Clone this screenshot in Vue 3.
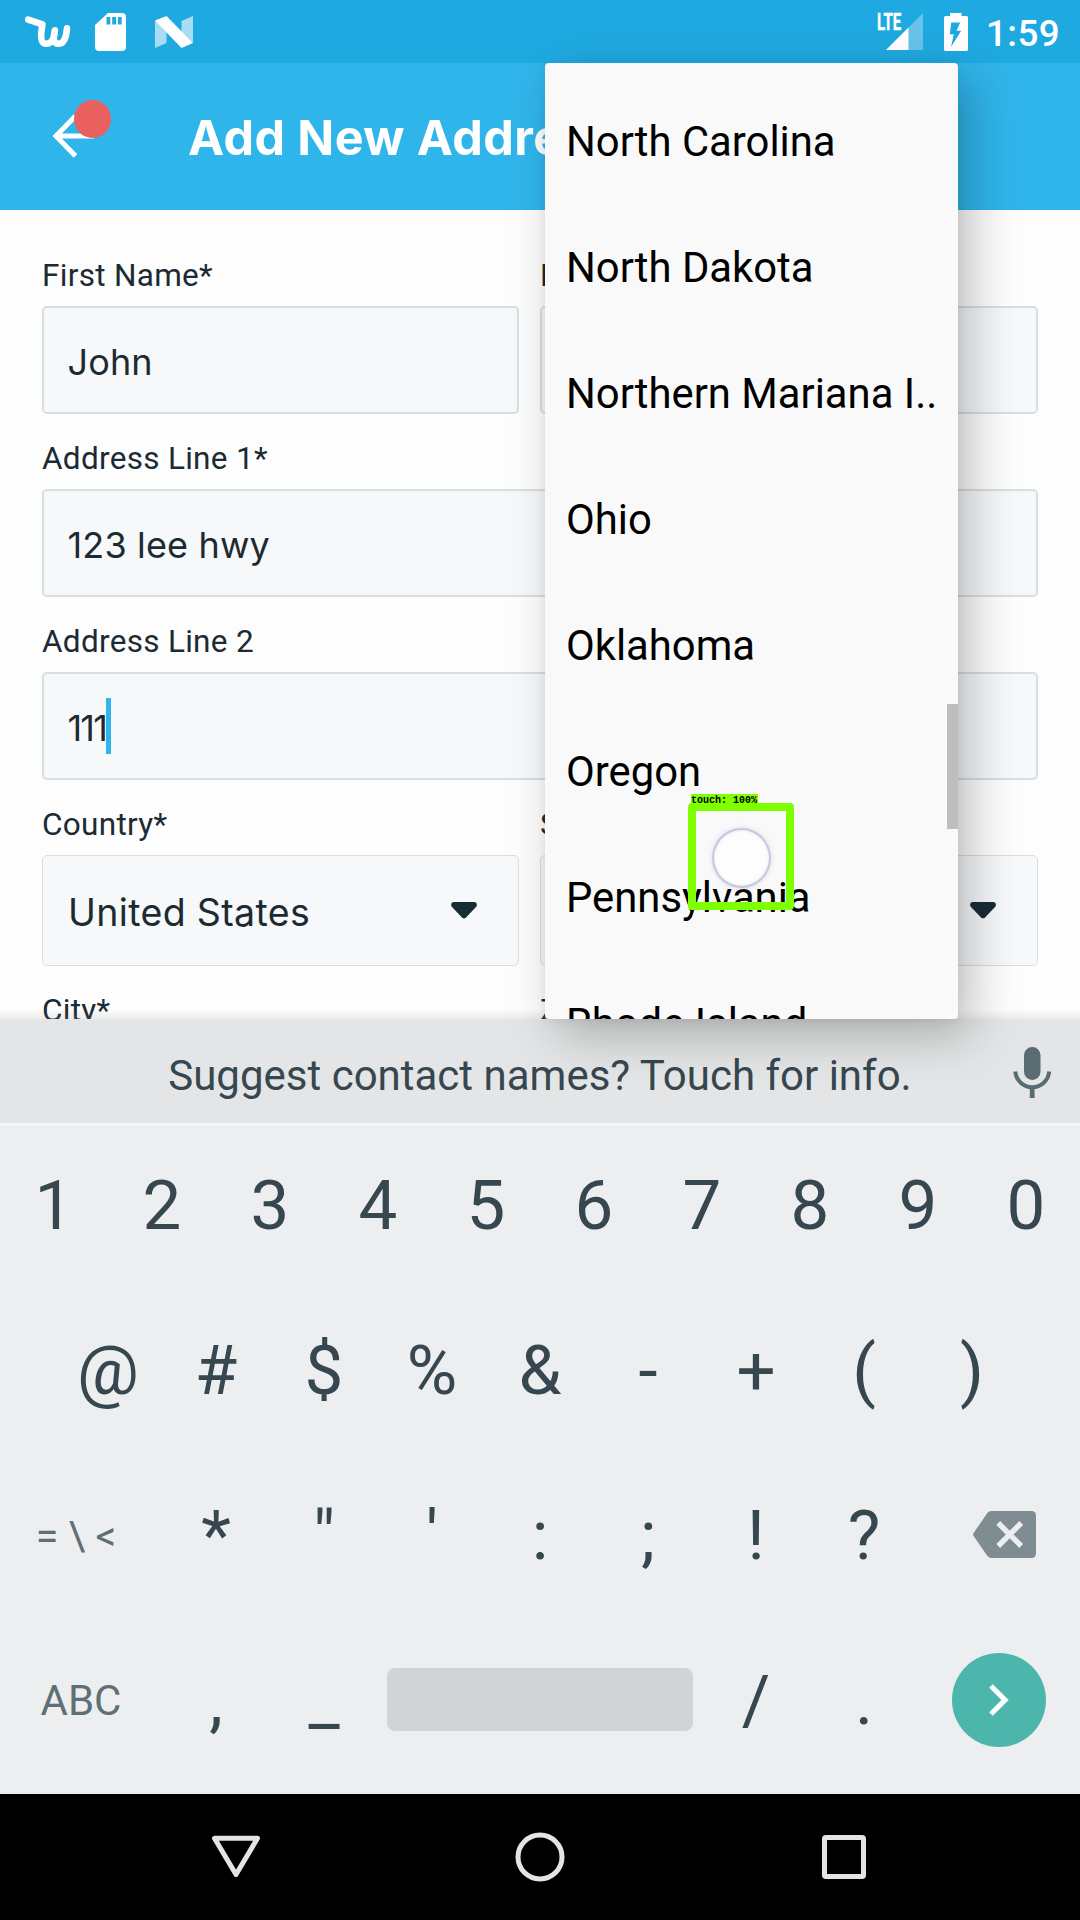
<script setup>
const formRows = [
  [{ label: 'First Name*', value: 'John' }, { label: 'Last Name*', value: '' }],
  [{ label: 'Address Line 1*', value: '123 lee hwy' }],
  [{ label: 'Address Line 2', value: '111', focused: true }],
  [
    { label: 'Country*', value: 'United States', select: true },
    { label: 'State*', value: '', select: true },
  ],
  [{ label: 'City*', value: '' }, { label: 'Zip/Postal Code*', value: '' }],
]

const states = [
  'North Carolina',
  'North Dakota',
  'Northern Mariana I..',
  'Ohio',
  'Oklahoma',
  'Oregon',
  'Pennsylvania',
  'Rhode Island',
]

const digits = ['1', '2', '3', '4', '5', '6', '7', '8', '9', '0']
const symbols = ['@', '#', '$', '%', '&', '-', '+', '(', ')']
const punctuation = ['*', '"', "'", ':', ';', '!', '?']
</script>

<template>
  <div class="screen">
    <header class="status-bar">
      <div class="notifications">
        <svg class="ic-wish" viewBox="0 0 46 33" width="46" height="33">
          <path
            d="M3.200 4.600L17.400 9.400C16.600 15 13.800 28.200 20.600 28.800C27 29 29.600 23 29.800 15.400C28.200 23 28 28.800 33.400 28.800C40 28.800 41.400 21 42 13.200"
            fill="none" stroke="#fff" stroke-width="6.600" stroke-linejoin="round" stroke-linecap="round"
          />
        </svg>
        <svg class="ic-sd" viewBox="0 0 31 38" width="31" height="38">
          <path
            fill="#fff" fill-rule="evenodd"
            d="M13 0H27a4 4 0 0 1 4 4V34a4 4 0 0 1-4 4H4a4 4 0 0 1-4-4V12zM11.500 4v7.500h3.800V4zM17.200 4v7.500h3.800V4zM22.900 4v7.500h3.800V4z"
          />
        </svg>
        <svg class="ic-n" viewBox="0 0 38 32" width="38" height="32">
          <path fill="#a8dcf4" d="M0 4.500L11.500 10V27L0 32zM26.500 5L38 0V27L26.500 16z" />
          <path fill="#fff" d="M0 4.500L11.500 0L38 27L26.500 32z" />
        </svg>
      </div>
      <div class="indicators">
        <div class="signal">
          <svg viewBox="0 0 37 37" width="37" height="37">
            <path fill="#67c3ec" d="M37 0V37H0z" />
            <path fill="#fff" d="M22.500 14.500V37H0z" />
          </svg>
          <span class="lte">LTE</span>
        </div>
        <svg class="ic-battery" viewBox="0 0 24 38" width="24" height="38">
          <path
            fill="#fff" fill-rule="evenodd"
            d="M6 0H17.500V3H22.500a1.500 1.500 0 0 1 1.500 1.500V36.500a1.500 1.500 0 0 1-1.500 1.500H1.500a1.500 1.500 0 0 1-1.500-1.500V4.500a1.500 1.500 0 0 1 1.500-1.500H6zM7.200 9.500L5.800 21.200H9.800L7 34L17.200 17.800H12.600L16.200 9.500z"
          />
        </svg>
        <span class="clock">1:59</span>
      </div>
    </header>

    <div class="app-bar">
      <div class="back">
        <svg viewBox="0 0 46 46" width="46" height="46">
          <path d="M23.500 3L4 23L23.500 43M4 23H42" fill="none" stroke="#fff" stroke-width="5" />
        </svg>
        <span class="badge"></span>
      </div>
      <h1 class="title">Add New Address</h1>
    </div>

    <main class="form">
      <div v-for="(row, r) in formRows" :key="r" class="row">
        <div v-for="f in row" :key="f.label" class="field">
          <label class="label">{{ f.label }}</label>
          <div class="box" :class="{ select: f.select }">
            <span class="value" :class="{ focused: f.focused }">{{ f.value }}</span>
            <span v-if="f.focused" class="cursor"></span>
            <svg v-if="f.select" class="caret" viewBox="0 0 26 17" width="26" height="17">
              <path
                fill="#182c36"
                d="M3 0H23C25.800 0 26.800 3 25 5L15 15.400C13.800 16.600 12.200 16.600 11 15.400L1 5C-.8 3 .2 0 3 0z"
              />
            </svg>
          </div>
        </div>
      </div>
    </main>

    <section class="keyboard">
      <div class="suggestion">
        <span>Suggest contact names? Touch for info.</span>
        <svg class="mic" viewBox="0 0 38 52" width="38" height="52">
          <rect x="11" y="0" width="16.500" height="33" rx="8.200" fill="#5b6b72" />
          <path d="M2.300 24.500A17 17 0 0 0 36.200 24.500" fill="none" stroke="#5b6b72" stroke-width="4" />
          <path d="M19.200 40V51" stroke="#5b6b72" stroke-width="4.800" />
        </svg>
      </div>
      <div class="keys">
        <div class="key-row">
          <span v-for="k in digits" :key="k" class="key">{{ k }}</span>
        </div>
        <div class="key-row inset">
          <span v-for="k in symbols" :key="k" class="key">{{ k }}</span>
        </div>
        <div class="key-row">
          <span class="key fn more">=&nbsp;\&nbsp;&lt;</span>
          <span v-for="k in punctuation" :key="k" class="key">{{ k }}</span>
          <span class="key side">
            <svg class="backspace" viewBox="0 0 63 47" width="63" height="47">
              <path
                fill="#7f8c91"
                d="M18.500 0H58.500A4.500 4.500 0 0 1 63 4.500V42.500A4.500 4.500 0 0 1 58.500 47H18.500Q15.800 47 14.400 45L.6 25Q-.4 23.500 .6 22L14.400 2Q15.800 0 18.500 0z"
              />
              <path d="M25.200 12L48.200 35M48.200 12L25.200 35" stroke="#eceef0" stroke-width="5.400" />
            </svg>
          </span>
        </div>
        <div class="key-row">
          <span class="key fn">ABC</span>
          <span class="key">,</span>
          <span class="key">_</span>
          <span class="key space"><i></i></span>
          <span class="key">/</span>
          <span class="key">.</span>
          <span class="key side">
            <span class="enter">
              <svg viewBox="0 0 22 34" width="22" height="34">
                <path d="M3 3L17 17L3 31" fill="none" stroke="#fff" stroke-width="5.200" />
              </svg>
            </span>
          </span>
        </div>
      </div>
    </section>

    <nav class="nav-bar">
      <svg viewBox="0 0 50 44" width="50" height="44">
        <path d="M3.500 3.300H46.500L25 39.500z" fill="none" stroke="#e4e4e4" stroke-width="5" stroke-linejoin="round" />
      </svg>
      <svg class="home" viewBox="0 0 50 50" width="50" height="50">
        <circle cx="25" cy="25" r="22" fill="none" stroke="#e4e4e4" stroke-width="5" />
      </svg>
      <svg viewBox="0 0 44 44" width="44" height="44">
        <rect x="2.500" y="2.500" width="39" height="39" rx="1.500" fill="none" stroke="#e4e4e4" stroke-width="5" />
      </svg>
    </nav>

    <div class="popup">
      <div class="options">
        <div v-for="s in states" :key="s" class="option">{{ s }}</div>
      </div>
      <span class="scroll-thumb"></span>
    </div>

    <div class="touch-dot"></div>
    <div class="touch-frame"></div>
    <span class="touch-label">touch: 100%</span>
  </div>
</template>

<style>
body {
  margin: 0;
}
</style>

<style scoped>
.screen {
  position: relative;
  display: flex;
  flex-direction: column;
  width: 1080px;
  height: 1920px;
  overflow: hidden;
  background: #fdfdfd;
  font-family: Roboto, sans-serif;
}

svg {
  display: block;
  flex: none;
}

.status-bar {
  display: flex;
  justify-content: space-between;
  height: 63px;
  background: #1fa9e1;
}

.notifications {
  display: flex;
  align-items: center;
  padding-left: 25px;
}

.ic-wish {
  margin-right: 24px;
}

.ic-sd {
  margin: 1px 29px 0 0;
}

.indicators {
  display: flex;
  align-items: center;
  padding-right: 20px;
}

.signal {
  position: relative;
  margin-right: 21px;
}

.lte {
  position: absolute;
  left: -9px;
  top: -2px;
  color: #fff;
  font-size: 23px;
  font-weight: 700;
  line-height: 23px;
  -webkit-text-stroke: 0.4px #fff;
  transform: scaleX(0.65);
  transform-origin: 0 0;
}

.ic-battery {
  margin-right: 18px;
}

.clock {
  margin-top: 4px;
  color: #fff;
  font-size: 36.75px;
  font-weight: 500;
  line-height: 44px;
  letter-spacing: 0.4px;
}

.app-bar {
  display: flex;
  align-items: center;
  height: 147px;
  background: #30b5eb;
}

.back {
  position: relative;
  margin: -1px 90px 0 52px;
}

.badge {
  position: absolute;
  left: 22px;
  top: -13px;
  width: 37px;
  height: 38px;
  border-radius: 50%;
  background: #ea605f;
}

.title {
  margin: 3px 0 0;
  color: #fff;
  font: 700 48.5px/60px Inter, sans-serif;
  letter-spacing: 0.4px;
  white-space: nowrap;
}

.form {
  height: 788px;
  padding: 21px 42px 0;
  overflow: hidden;
}

.row {
  display: flex;
}

.field {
  flex: 1;
}

.field + .field {
  margin-left: 21px;
  flex: 0 0 498px;
}

.label {
  display: block;
  padding: 26px 0 12px;
  color: #1c2b33;
  font-size: 31.5px;
  line-height: 37px;
  letter-spacing: 0.3px;
}

.box {
  display: flex;
  align-items: center;
  box-sizing: border-box;
  height: 108px;
  padding: 3px 0 0 23.500px;
  border: 2px solid #d5dfe6;
  border-radius: 5px;
  background: #f6f8fa;
  color: #1c2a31;
  font: 400 36px/46px Inter, sans-serif;
  letter-spacing: 0.15px;
}

.select {
  height: 111px;
  padding: 5px 41px 0 25px;
  border-width: 1px;
  font-size: 37.5px;
  letter-spacing: 0.35px;
}

.focused {
  letter-spacing: -1.8px;
}

.cursor {
  width: 5px;
  height: 56px;
  margin: -3px 0 0;
  background: #2fb7ec;
}

.caret {
  margin: -5px 0 0 auto;
}

.keyboard {
  position: relative;
  height: 775px;
  background: #eceef0;
}

/* soft edge the keyboard casts on the form */
.keyboard::before {
  content: '';
  position: absolute;
  left: 0;
  right: 0;
  top: -10px;
  height: 13px;
  background: linear-gradient(rgba(130, 135, 140, 0), rgba(130, 135, 140, 0.2));
}

.suggestion {
  display: flex;
  align-items: center;
  justify-content: center;
  position: relative;
  box-sizing: border-box;
  height: 107px;
  padding-top: 9px;
  border-bottom: 3px solid #f4f6f7;
  background: #e3e5e6;
  color: #37474f;
  font-size: 42px;
  line-height: 50px;
}

.mic {
  position: absolute;
  left: 1012.500px;
  top: 28px;
}

.keys {
  margin-top: -4px;
}

.key-row {
  display: flex;
  height: 165px;
}

.inset {
  padding: 0 54px;
}

.key {
  display: flex;
  flex: none;
  align-items: center;
  justify-content: center;
  box-sizing: border-box;
  width: 108px;
  padding-top: 2px;
  color: #37474f;
  font-size: 69px;
  line-height: 81px;
}

.fn {
  width: 162px;
  color: #5f6f76;
  font-size: 42px;
  line-height: 50px;
}

.more {
  padding-right: 10px;
  font-size: 41px;
}

.side {
  width: 162px;
  padding-top: 0;
}

.backspace {
  margin-left: 11px;
}

.space {
  width: 324px;
  padding-top: 0;
}

.space i {
  width: 306px;
  height: 63px;
  border-radius: 8px;
  background: #d0d4d6;
}

.enter {
  display: flex;
  align-items: center;
  justify-content: center;
  width: 94px;
  height: 94px;
  border-radius: 50%;
  background: #4db6ac;
}

.nav-bar {
  display: flex;
  align-items: center;
  justify-content: space-between;
  box-sizing: border-box;
  height: 126px;
  padding: 0 214px 0 211px;
  background: #000;
}

.home {
  margin-right: 3px;
}

.popup {
  position: absolute;
  left: 545px;
  top: 63px;
  width: 413px;
  height: 956px;
  border-radius: 4px;
  background: #f9f9f9;
  box-shadow: 13px 16px 48px rgba(0, 0, 0, 0.25), 0 2px 10px rgba(0, 0, 0, 0.06);
}

.options {
  height: 940px;
  padding-top: 16px;
  overflow: hidden;
}

.option {
  padding-left: 21px;
  color: #000;
  font-size: 41.8px;
  line-height: 126px;
  white-space: nowrap;
}

.scroll-thumb {
  position: absolute;
  right: 0;
  top: 641px;
  width: 11px;
  height: 125px;
  background: #bebebe;
}

.touch-frame {
  position: absolute;
  left: 688px;
  top: 803px;
  box-sizing: border-box;
  width: 106px;
  height: 107px;
  border: 8px solid #80ff00;
  border-radius: 4px;
}

.touch-label {
  position: absolute;
  left: 691px;
  top: 794px;
  width: 67px;
  height: 11px;
  background: #80ff00;
  color: #000;
  font: 700 10px/14px 'Liberation Mono', monospace;
  white-space: nowrap;
}

.touch-dot {
  position: absolute;
  left: 712px;
  top: 828px;
  box-sizing: border-box;
  width: 59px;
  height: 60px;
  border: 2.500px solid #c6c7df;
  border-radius: 50%;
  background: rgba(255, 255, 255, 0.6);
  box-shadow: 0 0 4px rgba(190, 190, 220, 0.6), inset 0 0 3px rgba(200, 200, 225, 0.5);
}
</style>
